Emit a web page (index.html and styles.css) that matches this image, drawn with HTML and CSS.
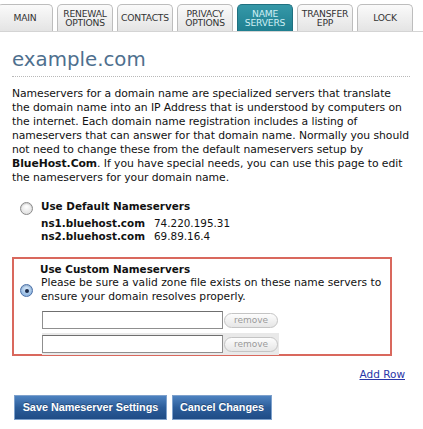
FILE: index.html
```html
<!DOCTYPE html>
<html>
<head>
<meta charset="utf-8">
<link rel="stylesheet" href="styles.css">
</head>
<body>
<div class="tabs">
  <div class="tab first">MAIN</div>
  <div class="tab">RENEWAL<br>OPTIONS</div>
  <div class="tab">CONTACTS</div>
  <div class="tab">PRIVACY<br>OPTIONS</div>
  <div class="tab active">NAME<br>SERVERS</div>
  <div class="tab">TRANSFER<br>EPP</div>
  <div class="tab">LOCK</div>
</div>
<div class="content">
  <h1 class="title">example.com</h1>
  <p class="intro">Nameservers for a domain name are specialized servers that translate<br>the domain name into an IP Address that is understood by computers on<br>the internet. Each domain name registration includes a listing of<br>nameservers that can answer for that domain name. Normally you should<br>not need to change these from the default nameservers setup by<br><b>BlueHost.Com</b>. If you have special needs, you can use this page to edit<br>the nameservers for your domain name.</p>

  <div class="option default">
    <span class="radio"></span>
    <div class="opt-body">
      <div class="opt-title">Use Default Nameservers</div>
      <div class="ns-list">
        <div class="ns"><b>ns1.bluehost.com</b><span>74.220.195.31</span></div>
        <div class="ns"><b>ns2.bluehost.com</b><span>69.89.16.4</span></div>
      </div>
    </div>
  </div>

  <div class="custom-box">
    <div class="opt-title custom-title">Use Custom Nameservers</div>
    <div class="custom-row">
      <span class="radio checked"></span>
      <div class="custom-text">Please be sure a valid zone file exists on these name servers to<br>ensure your domain resolves properly.</div>
    </div>
    <div class="inputs">
      <div class="in-row"><span class="field"></span><span class="remove">remove</span></div>
      <div class="in-row hl"><span class="field"></span><span class="remove">remove</span></div>
    </div>
  </div>
  <div class="addrow"><a href="#">Add Row</a></div>
  <div class="buttons">
    <span class="btn btn-save">Save Nameserver Settings</span>
    <span class="btn btn-cancel">Cancel Changes</span>
  </div>
</div>
</body>
</html>
```

FILE: styles.css
```css
html, body {
  margin: 0;
  padding: 0;
  background: #fff;
}
body {
  font-family: "DejaVu Sans", Verdana, sans-serif;
  color: #111;
  width: 423px;
  height: 429px;
  overflow: hidden;
}
.tabs {
  display: flex;
  gap: 4px;
  padding-top: 4px;
  margin-left: -3px;
  border-bottom: 1px solid #d4d4d4;
  width: 426px;
}
.tab {
  width: 54px;
  height: 26px;
  box-sizing: content-box;
  border: 1px solid #bdbdbd;
  border-bottom: none;
  border-radius: 5px 5px 0 0;
  background: linear-gradient(#fafafa, #e4e4e4);
  font-size: 9.2px;
  line-height: 9.5px;
  color: #333;
  display: flex;
  align-items: center;
  justify-content: center;
  text-align: center;
  letter-spacing: -0.2px;
}
.tab.active {
  background: linear-gradient(#3598a8, #1f7f90);
  border-color: #1f7080;
  color: #cdeef3;
}
.content {
  padding: 0 12px;
}
.title {
  margin: 14px 0 0 0;
  font-family: "DejaVu Sans", Verdana, sans-serif;
  font-weight: normal;
  font-size: 19.8px;
  line-height: 28px;
  color: #4e6f8e;
  border-bottom: 1px dotted #b8b8b8;
  padding-bottom: 2px;
  width: 398px;
}
.intro {
  margin: 10px 0 0 0;
  font-size: 10.8px;
  line-height: 14px;
  color: #111;
  letter-spacing: -0.05px;
  white-space: nowrap;
}
.intro b {
  font-weight: bold;
}
.option {
  display: flex;
  gap: 8px;
  margin-top: 14px;
  margin-left: 8px;
}
.radio {
  width: 11px;
  height: 11px;
  border-radius: 50%;
  border: 1px solid #8a8a8a;
  background: radial-gradient(circle at 50% 35%, #ffffff, #d8d8d8);
  flex: none;
  margin-top: 3px;
  box-shadow: inset 0 1px 1px rgba(0,0,0,0.15);
  position: relative;
}
.radio.checked {
  border-color: #4a6fa8;
  background: radial-gradient(circle at 50% 35%, #d6e8fa, #7aa7d8);
}
.radio.checked::after {
  content: "";
  position: absolute;
  left: 3.5px;
  top: 3.5px;
  width: 4px;
  height: 4px;
  border-radius: 50%;
  background: #1a2a4a;
}
.opt-title {
  font-weight: bold;
  font-size: 10.4px;
  line-height: 14px;
}
.ns-list {
  margin-top: 4px;
  font-size: 10.4px;
  line-height: 13px;
}
.ns {
  display: flex;
}
.ns b {
  width: 113px;
}
.custom-box {
  margin-top: 14px;
  border: 2px solid #d9685d;
  width: 380px;
  height: 99px;
  box-sizing: border-box;
  padding: 4px 0 0 26px;
  margin-left: 0;
}
.custom-title {
  line-height: 13px;
}
.custom-row {
  display: flex;
  gap: 8px;
  margin-left: -20px;
}
.custom-row .radio {
  margin-top: 8px;
}
.custom-text {
  font-size: 10.7px;
  line-height: 14px;
  white-space: nowrap;
}
.inputs {
  margin-top: 7px;
  margin-left: 2px;
  display: flex;
  flex-direction: column;
  gap: 6px;
}
.in-row {
  display: flex;
  align-items: center;
  width: 237px;
}
.in-row.hl {
  background: #e9e9e9;
  padding: 2px 0;
  margin-top: -2px;
}
.field {
  width: 179px;
  height: 16px;
  border: 1px solid #8f8f8f;
  border-top-color: #6f6f6f;
  background: #fff;
  flex: none;
}
.remove {
  margin-left: 1px;
  width: 52px;
  height: 13px;
  border: 1px solid #c4c4c4;
  border-radius: 8px;
  background: linear-gradient(#fdfdfd, #e6e6e6);
  color: #9a9a9a;
  font-size: 9px;
  line-height: 13px;
  text-align: center;
}
.addrow {
  text-align: right;
  width: 393px;
  margin-top: 12px;
  font-size: 10.5px;
  line-height: 12px;
}
.addrow a {
  color: #2a36a8;
}
.buttons {
  display: flex;
  gap: 5px;
  margin-top: 15px;
  margin-left: 2px;
}
.btn {
  height: 25px;
  box-sizing: border-box;
  background: linear-gradient(#4d82c0, #2c5d9a 50%, #1f4c86);
  border: 1px solid #7ea1cc;
  color: #fff;
  font-family: "Liberation Sans", Arial, sans-serif;
  font-weight: bold;
  font-size: 10.8px;
  line-height: 23px;
  text-align: center;
  text-shadow: 0 -1px 0 rgba(0,0,0,0.3);
}
.btn-save {
  width: 153px;
}
.btn-cancel {
  width: 100px;
}
```
